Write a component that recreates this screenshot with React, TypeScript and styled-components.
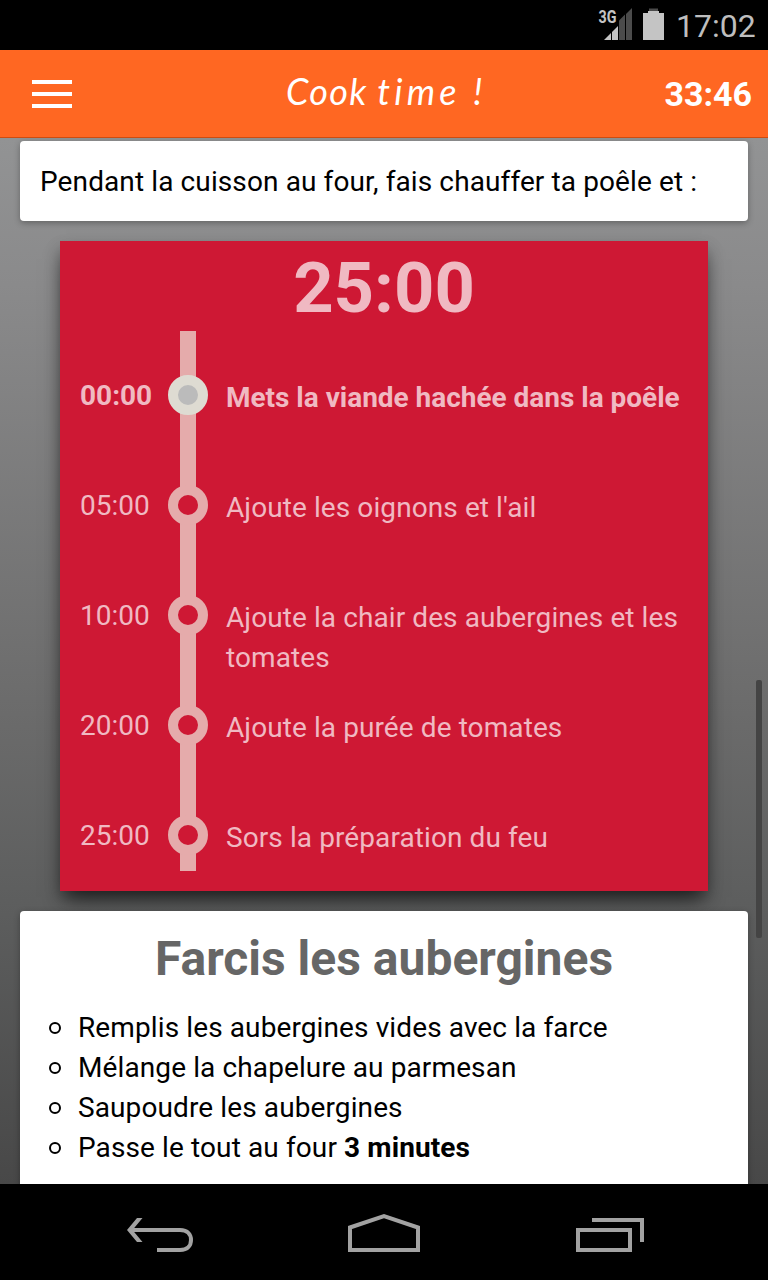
import React from "react";
import styled, { createGlobalStyle } from "styled-components";

const GlobalStyle = createGlobalStyle`
  * { box-sizing: border-box; }
  body { margin: 0; background: #000; font-family: Roboto, "Liberation Sans", sans-serif; }
`;

const Screen = styled.div`
  width: 768px;
  height: 1280px;
  display: flex;
  flex-direction: column;
  overflow: hidden;
`;

const StatusBar = styled.div`
  height: 50px;
  flex: none;
  padding: 0 12px 0 0;
  display: flex;
  justify-content: flex-end;
  align-items: center;
  background: #000;
  color: #bebebe;
`;

const StatusIcons = styled.svg`
  width: 70px;
  height: 50px;
  margin-right: 8px;
`;

const Clock = styled.span`
  width: 80px;
  padding-top: 1px;
  font-size: 32px;
  line-height: 50px;
  white-space: nowrap;
`;

const Header = styled.header`
  height: 88px;
  flex: none;
  padding: 0 16px 0 32px;
  display: grid;
  grid-template-columns: 1fr auto 1fr;
  align-items: center;
  background: #ff6722;
  border-bottom: 1px solid #cf4c10;
  color: #fff;
`;

const MenuButton = styled.button`
  width: 40px;
  height: 28px;
  padding: 0;
  border: 0;
  background: none;
  display: flex;
  flex-direction: column;
  justify-content: space-between;
`;

const MenuBar = styled.span`
  height: 4px;
  width: 100%;
  background: #fff;
`;

const Title = styled.h1`
  margin: 0 10px 6px 0;
  width: 202px;
  font: italic 400 36px Lato, sans-serif;
  white-space: pre;
`;

const Word = styled.span<{ $spacing: number }>`
  letter-spacing: ${(p) => p.$spacing}px;
`;

const Remaining = styled.span`
  justify-self: end;
  font-size: 34px;
  font-weight: 700;
  line-height: 88px;
`;

const Content = styled.main`
  position: relative;
  flex: 1;
  min-height: 0;
  overflow: hidden;
  padding: 3px 20px 0;
  display: flex;
  flex-direction: column;
  gap: 20px;
  background: linear-gradient(#929394 0%, #8a8a8b 14%, #6b6b6b 55%, #5d5e5e 73%, #484848 100%);
`;

const Card = styled.section`
  flex: none;
  padding: 20px;
  border-radius: 4px;
  background: #fff;
  box-shadow: 0 2px 6px rgba(0, 0, 0, 0.3);
  color: #000;
  font-size: 28px;
  line-height: 40px;
  letter-spacing: 0.11px;
`;

const Intro = styled.p`
  margin: 0;
  padding-top: 1px;
  height: 40px;
`;

const Panel = styled.section`
  flex: none;
  height: 650px;
  margin: 0 40px;
  background: #ce1834;
  box-shadow: 0 12px 20px -6px rgba(0, 0, 0, 0.65), 0 8px 14px rgba(0, 0, 0, 0.25);
  color: #f0b9c2;
`;

const PanelTime = styled.div`
  height: 90px;
  padding-top: 2px;
  text-align: center;
  font-size: 70.500px;
  font-weight: 700;
  line-height: 90px;
`;

const Timeline = styled.div`
  height: 540px;
  padding: 44px 20px 0;
  background: linear-gradient(#e5abab, #e5abab) 120px 0 / 16px 100% no-repeat;
`;

const Step = styled.div<{ $active?: boolean }>`
  height: 110px;
  display: grid;
  grid-template-columns: 88px 58px 1fr;
  align-items: start;
  font-size: 28px;
  line-height: 40px;
  font-weight: ${(p) => (p.$active ? 700 : 400)};
  letter-spacing: ${(p) => (p.$active ? "-0.02px" : "0.09px")};
`;

const StepTime = styled.span`
  padding-top: 1px;
  letter-spacing: 0;
`;

const Dot = styled.span<{ $active?: boolean }>`
  width: 40px;
  height: 40px;
  border-radius: 50%;
  border: 10px solid ${(p) => (p.$active ? "#dedbd2" : "#e5abab")};
  background: ${(p) => (p.$active ? "#bbb" : "#ce1834")};
`;

const StepText = styled.span`
  padding-top: 3px;
  margin-right: -10px;
`;

const CardTitle = styled.h2`
  margin: -2px 0 20px;
  text-align: center;
  color: #666;
  font-size: 48px;
  font-weight: 700;
  line-height: 59px;
  letter-spacing: 0;
`;

const List = styled.ul`
  margin: 0;
  padding: 0 0 20px 8px;
  list-style: none;
`;

const Item = styled.li`
  display: flex;
  align-items: center;
  height: 40px;
  white-space: pre;
`;

const Bullet = styled.span`
  width: 12px;
  height: 12px;
  margin: 0 17px 0 1px;
  border: 2px solid #000;
  border-radius: 50%;
`;

const ScrollThumb = styled.div`
  position: absolute;
  right: 6px;
  top: 542px;
  width: 6px;
  height: 258px;
  border-radius: 2px;
  background: #444;
`;

const NavBar = styled.nav`
  height: 96px;
  flex: none;
  background: #000;
`;

const NavIcons = styled.svg`
  display: block;
  width: 768px;
  height: 96px;
  fill: none;
  stroke: #a2a2a2;
  stroke-width: 4;
`;

const NetworkLabel = styled.text`
  font: 700 17.5px Roboto, sans-serif;
`;

const steps = [
  { time: "00:00", text: "Mets la viande hachée dans la poêle", active: true },
  { time: "05:00", text: "Ajoute les oignons et l'ail" },
  { time: "10:00", text: "Ajoute la chair des aubergines et les tomates" },
  { time: "20:00", text: "Ajoute la purée de tomates" },
  { time: "25:00", text: "Sors la préparation du feu" },
];

export default function App() {
  return (
    <Screen>
      <GlobalStyle />
      <StatusBar>
        <StatusIcons viewBox="0 0 70 50">
          <g fill="#4b4b4b">
            <path d="M21 20.5L27 14.5V40H21Z" />
            <path d="M28 14L34 8V40H28Z" />
            <rect x="51" y="8.500" width="9" height="4" />
          </g>
          <g fill="#c4c4c4">
            <path d="M6 40L13 33V40Z" />
            <path d="M14 32L20 26V40H14Z" />
            <path d="M45 13H50V11H61V13H66V40H45Z" />
            <NetworkLabel x="0.500" y="23" textLength="18" lengthAdjust="spacingAndGlyphs">3G</NetworkLabel>
          </g>
        </StatusIcons>
        <Clock>17:02</Clock>
      </StatusBar>
      <Header>
        <MenuButton aria-label="Menu">
          <MenuBar />
          <MenuBar />
          <MenuBar />
        </MenuButton>
        <Title>
          <Word $spacing={1.3}>Cook </Word>
          <Word $spacing={4.2}>time </Word>
          <Word $spacing={0}>!</Word>
        </Title>
        <Remaining>33:46</Remaining>
      </Header>
      <Content>
        <Card>
          <Intro>Pendant la cuisson au four, fais chauffer ta poêle et :</Intro>
        </Card>
        <Panel>
          <PanelTime>25:00</PanelTime>
          <Timeline>
            {steps.map((s) => (
              <Step key={s.time} $active={s.active}>
                <StepTime>{s.time}</StepTime>
                <Dot $active={s.active} />
                <StepText>{s.text}</StepText>
              </Step>
            ))}
          </Timeline>
        </Panel>
        <Card>
          <CardTitle>Farcis les aubergines</CardTitle>
          <List>
            <Item><Bullet />Remplis les aubergines vides avec la farce</Item>
            <Item><Bullet />Mélange la chapelure au parmesan</Item>
            <Item><Bullet />Saupoudre les aubergines</Item>
            <Item><Bullet />Passe le tout au four <b>3 minutes</b></Item>
          </List>
        </Card>
        <ScrollThumb />
      </Content>
      <NavBar>
        <NavIcons viewBox="0 0 768 96">
          <path d="M131 46H180C188 46 191 51 191 56C191 61 188 66 180 66H157" />
          <path d="M127 46L137 34H142.500L132.500 46L142.500 58H137Z" fill="#a2a2a2" stroke="none" />
          <path d="M350 43.500L384 32L418 43.500V66H350Z" />
          <path d="M578 46H630V66H578Z" />
          <path d="M592 36H642V58" />
        </NavIcons>
      </NavBar>
    </Screen>
  );
}
